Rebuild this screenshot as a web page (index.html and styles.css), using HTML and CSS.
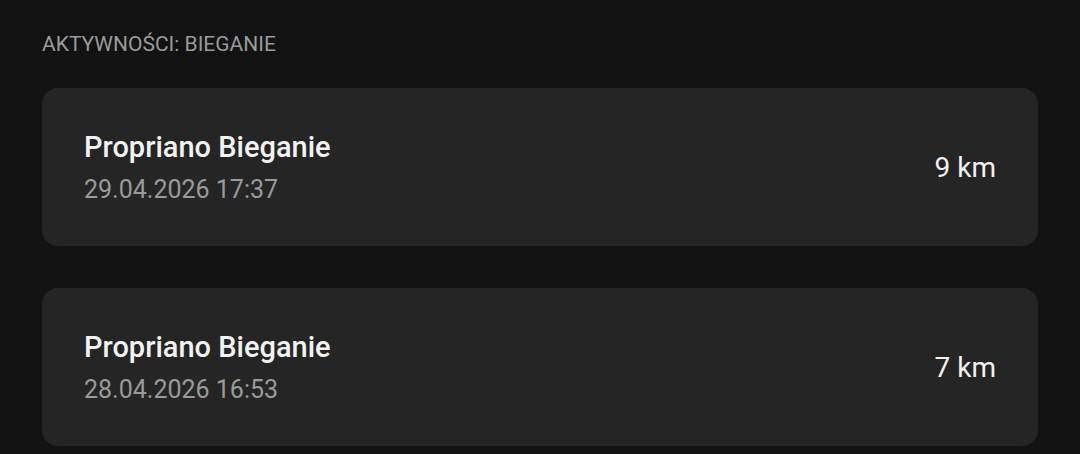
FILE: index.html
```html
<!DOCTYPE html>
<html lang="pl">
<head>
<meta charset="utf-8">
<link rel="stylesheet" href="styles.css">
</head>
<body>
<main class="page">
  <h2 class="section-title">AKTYWNOŚCI: BIEGANIE</h2>
  <ul class="list">
    <li class="card">
      <div class="info">
        <div class="name">Propriano Bieganie</div>
        <div class="date">29.04.2026 17:37</div>
      </div>
      <div class="dist">9 km</div>
    </li>
    <li class="card">
      <div class="info">
        <div class="name">Propriano Bieganie</div>
        <div class="date">28.04.2026 16:53</div>
      </div>
      <div class="dist">7 km</div>
    </li>
  </ul>
</main>
</body>
</html>
```
FILE: styles.css
```css
html, body {
  margin: 0;
  padding: 0;
  background: #121212;
  font-family: Roboto, "Liberation Sans", sans-serif;
}
.page {
  padding: 30px 42px 0 42px;
}
.section-title {
  margin: 0 0 30px 0;
  font-size: 21px;
  font-weight: 400;
  line-height: 28px;
  color: #9a9a9a;
}
.list {
  list-style: none;
  margin: 0;
  padding: 0;
  display: flex;
  flex-direction: column;
  gap: 42px;
}
.card {
  background: #252525;
  border-radius: 16px;
  height: 158px;
  box-sizing: border-box;
  padding: 0 42px;
  display: flex;
  align-items: center;
  justify-content: space-between;
}
.info {
  display: flex;
  flex-direction: column;
  gap: 9px;
}
.name {
  font-size: 29px;
  font-weight: 500;
  color: #f2f2f2;
  line-height: 36px;
}
.date {
  font-size: 25px;
  color: #9a9a9a;
  line-height: 32px;
}
.dist {
  font-size: 28px;
  color: #f2f2f2;
  line-height: 36px;
  padding-top: 2px;
}
```
